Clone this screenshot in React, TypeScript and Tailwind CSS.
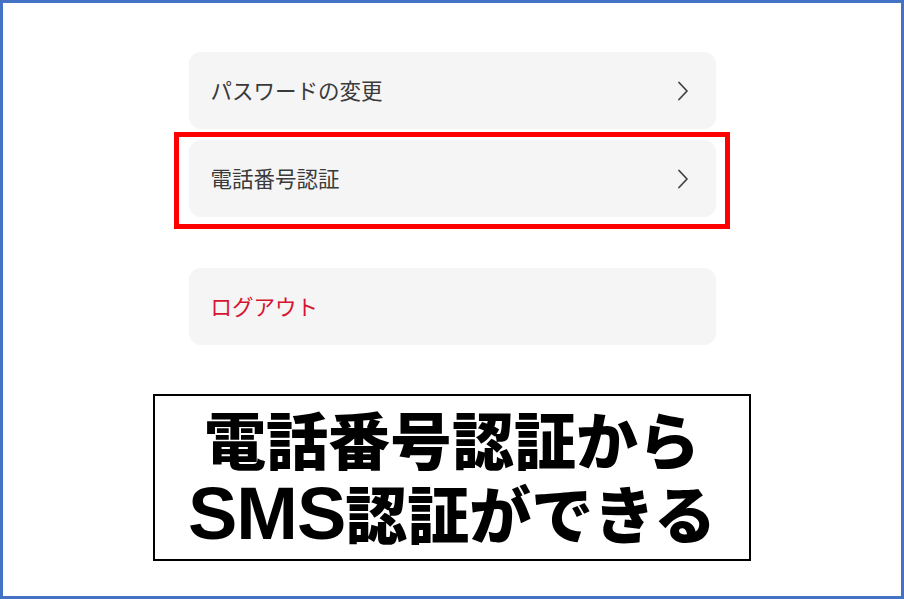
const jp = "font-['Noto_Sans_CJK_JP','Noto_Sans',sans-serif]";

const Chevron = () => (
  <svg width="12" height="20" viewBox="0 0 12 20" fill="none" className="shrink-0">
    <path d="M2 1.5 L10 10 L2 18.5" stroke="#444" strokeWidth="1.8" strokeLinecap="round" strokeLinejoin="round" />
  </svg>
);

const Row = ({ label, red, arrow }: { label: string; red?: boolean; arrow?: boolean }) => (
  <div className="h-[77px] w-full rounded-[12px] bg-[#f5f5f5] flex items-center justify-between pl-[22px] pr-[27px]">
    <span className={`${jp} text-[21.5px] ${red ? "text-[#d6142f]" : "text-[#3a3a3a]"}`}>{label}</span>
    {arrow && <Chevron />}
  </div>
);

export default function App() {
  return (
    <div className="w-[904px] h-[599px] bg-white border-[3px] border-[#4472c4] flex flex-col items-center">
      <div className="w-[527px] mt-[49px] flex flex-col">
        <Row label="パスワードの変更" arrow />
        <div className="relative mt-[11px]">
          <Row label="電話番号認証" arrow />
          <div className="absolute -left-[15px] -right-[14px] -top-[8px] -bottom-[12px] border-[5px] border-[#ff0000] pointer-events-none" />
        </div>
        <div className="mt-[51px]">
          <Row label="ログアウト" red />
        </div>
      </div>
      <div className="mt-[49px] w-[598px] h-[167px] border-2 border-black flex flex-col items-center justify-center">
        <p className={`${jp} font-black text-[62px] leading-[74px] text-black -mt-[4px]`}>電話番号認証から</p>
        <p className={`${jp} font-black text-[62px] leading-[74px] text-black whitespace-nowrap`}>
          <span className="font-['Liberation_Sans',sans-serif] font-bold text-[74px] tracking-[-1px]">SMS</span>認証ができる
        </p>
      </div>
    </div>
  );
}
